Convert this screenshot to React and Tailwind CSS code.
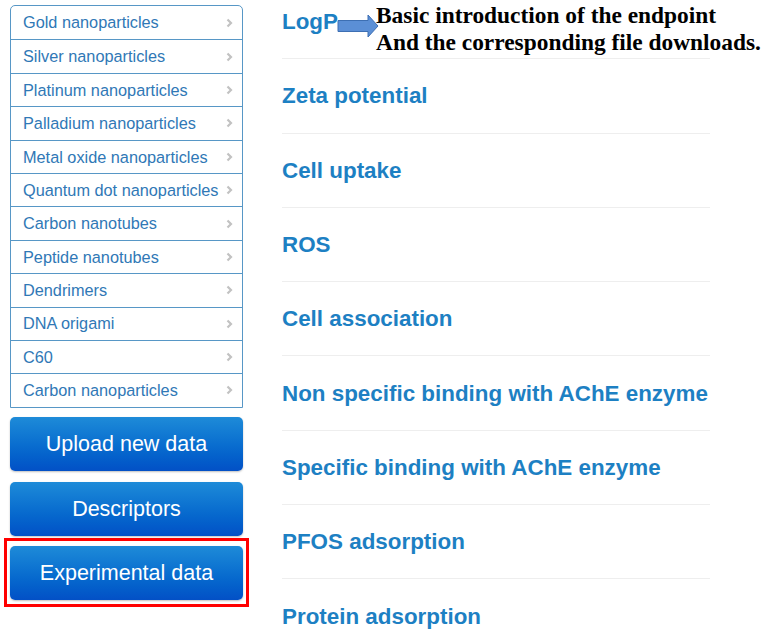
import React from "react";

const categories = [
  "Gold nanoparticles",
  "Silver nanoparticles",
  "Platinum nanoparticles",
  "Palladium nanoparticles",
  "Metal oxide nanoparticles",
  "Quantum dot nanoparticles",
  "Carbon nanotubes",
  "Peptide nanotubes",
  "Dendrimers",
  "DNA origami",
  "C60",
  "Carbon nanoparticles",
];

const endpoints = [
  "LogP",
  "Zeta potential",
  "Cell uptake",
  "ROS",
  "Cell association",
  "Non specific binding with AChE enzyme",
  "Specific binding with AChE enzyme",
  "PFOS adsorption",
  "Protein adsorption",
];

function Chevron() {
  return (
    <svg width="7" height="10" viewBox="0 0 7 10" className="shrink-0">
      <path d="M1.5 1.5 L5 5 L1.5 8.5" fill="none" stroke="#c2c2c2" strokeWidth="2.2" />
    </svg>
  );
}

function BlueButton({ children }) {
  return (
    <div className="h-[54px] w-full flex items-center justify-center rounded-[5px] bg-linear-to-b from-[#1e8bd8] to-[#0350c6] text-white text-[21.5px] shadow-[0_1px_2px_rgba(0,0,0,0.25)]">
      {children}
    </div>
  );
}

export default function App() {
  return (
    <div
      className="w-[763px] h-[635px] overflow-hidden bg-white flex pl-[10px] pt-[5px] gap-[39px]"
      style={{ fontFamily: '"Liberation Sans", Arial, sans-serif' }}
    >
      <div className="w-[233px] shrink-0 flex flex-col">
        <div className="border border-[#5797c6] rounded-t-[5px] overflow-hidden">
          {categories.map((c, i) => (
            <div
              key={c}
              className={`h-[33.4px] flex items-center justify-between pl-[12px] pr-[9px] text-[16.3px] text-[#3078b6] ${
                i > 0 ? "border-t border-[#5797c6]" : ""
              }`}
            >
              <span className="whitespace-nowrap">{c}</span>
              <Chevron />
            </div>
          ))}
        </div>
        <div className="mt-[9px]">
          <BlueButton>Upload new data</BlueButton>
        </div>
        <div className="mt-[11px]">
          <BlueButton>Descriptors</BlueButton>
        </div>
        <div className="mt-[2px] -mx-[6px] border-[3px] border-[#ff0000] px-[3px] pt-[5px] pb-[4px]">
          <BlueButton>Experimental data</BlueButton>
        </div>
      </div>

      <div className="w-[428px] shrink-0 -mt-[20px]">
        {endpoints.map((e, i) => (
          <div
            key={e}
            className="relative h-[74.3px] flex items-center border-b border-[#eeeeee]"
          >
            <span className="text-[22.4px] leading-[25px] font-bold text-[#1d80c3] whitespace-nowrap">
              {e}
            </span>
            {i === 0 && (
              <div className="absolute left-[55px] top-[17px] flex items-start">
                <svg width="42" height="24" viewBox="0 0 42 24" className="mt-[12px] shrink-0">
                  <path
                    d="M1 6.5 H31 V1 L41 12 L31 23 V17.5 H1 Z"
                    fill="#5b8fd6"
                    stroke="#3d6fb3"
                    strokeWidth="1"
                  />
                </svg>
                <div
                  className="ml-[-3px] font-bold text-black text-[23.4px] leading-[27px] whitespace-nowrap"
                  style={{ fontFamily: '"Liberation Serif", "Times New Roman", serif' }}
                >
                  <div>Basic introduction of the endpoint</div>
                  <div>And the corresponding file downloads.</div>
                </div>
              </div>
            )}
          </div>
        ))}
      </div>
    </div>
  );
}
